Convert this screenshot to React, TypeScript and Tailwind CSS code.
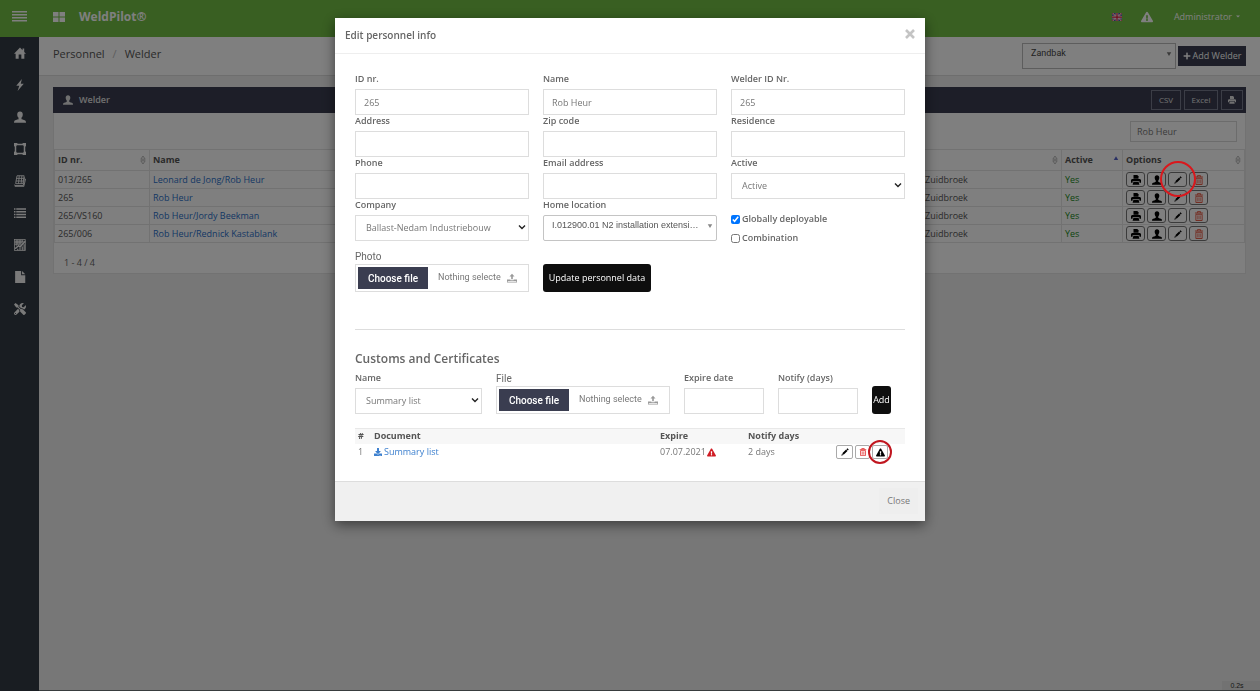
import React, { useState } from 'react';
import { FaDownload, FaExclamationTriangle, FaPlus, FaTools } from 'react-icons/fa';

type IconProps = { className?: string };

const HomeIcon = ({ className }: IconProps) => (
  <svg viewBox="0 0 16 16" className={className} fill="currentColor" aria-hidden="true">
    <path d="M8 .8 0 9h2.2v6.5h4V10h3.6v5.5h4V9H16l-2.4-2.5V2h-2.2v2.2z" />
  </svg>
);

const BoltIcon = ({ className }: IconProps) => (
  <svg viewBox="0 0 16 16" className={className} fill="currentColor" aria-hidden="true">
    <path d="M10.5 0 3 9h4l-2.2 7L13 6.2H9z" />
  </svg>
);

const UserIcon = ({ className }: IconProps) => (
  <svg viewBox="0 0 16 16" className={className} fill="currentColor" aria-hidden="true">
    <path d="M8 .5c2.400 0 3.700 1.600 3.700 4 0 1.900-.8 3.400-1.700 4.300v1.900c0 .6 4.600 1.200 5.500 2.600.3.600.5 1.400.5 2.200H0c0-.8.2-1.600.5-2.200C1.400 11.900 6 11.300 6 10.700V8.800c-.9-.9-1.700-2.400-1.700-4.300 0-2.400 1.300-4 3.700-4z" />
  </svg>
);

const FrameIcon = ({ className }: IconProps) => (
  <svg viewBox="0 0 16 16" className={className} fill="currentColor" aria-hidden="true">
    <path
      d="M0 0h4l1 1h6l1-1h4v4l-1 1v6l1 1v4h-4l-1-1H5l-1 1H0v-4l1-1V5L0 4zM3 4v8l1 1h8l1-1V4l-1-1H4z"
      fillRule="evenodd"
    />
  </svg>
);

const StackIcon = ({ className }: IconProps) => (
  <svg viewBox="0 0 16 16" className={className} fill="none" stroke="currentColor" strokeWidth="1.2" aria-hidden="true">
    <path d="M4 1h9.500L12 11.500H2.200zM2.500 8h10M3 4.500h10M7 1 6 11.500M10.500 1l-1 10.500" />
    <path d="M0 12.500 1 14h11.500L14 3M1 15.500h12L15.500 5" />
  </svg>
);

const ListIcon = ({ className }: IconProps) => (
  <svg viewBox="0 0 16 16" className={className} fill="currentColor" aria-hidden="true">
    <path d="M0 1.500h2v2H0zM3 1.500h13v2H3zM0 5.200h2v2H0zM3 5.200h13v2H3zM0 8.900h2v2H0zM3 8.900h13v2H3zM0 12.600h2v2H0zM3 12.600h13v2H3z" />
  </svg>
);

const ChartIcon = ({ className }: IconProps) => (
  <svg viewBox="0 0 16 16" className={className} fill="none" stroke="currentColor" aria-hidden="true">
    <path d="M0 .5h15v15H.5V0M3 1v8M5 1v6M7 1v6M9 1v6M11 1v4M1 3h12M1 5h10M1 7h8" strokeWidth="1.200" />
    <path d="M1.500 13 6 9l2 1.500L15 3" strokeWidth="2" />
    <path d="M5 15v-2M8 15v-3M11 15v-5M13.500 15V7" strokeWidth="1.500" />
  </svg>
);

const FileIcon = ({ className }: IconProps) => (
  <svg viewBox="0 0 16 16" className={className} fill="currentColor" aria-hidden="true">
    <path d="M1.500 0h8v5.500h5.500V16H1.500zM10.700 0 15 4.400h-4.300z" />
  </svg>
);

const PrinterIcon = ({ className }: IconProps) => (
  <svg viewBox="0 0 16 16" className={className} fill="currentColor" aria-hidden="true">
    <path d="M4 0h6l2 2v4H4z" />
    <path d="M1.500 6.500h13L16 8v4.500h-2.500V10h-11v2.500H0V8zM3.800 11.200h8.400l1.300 4.300h-11z" />
  </svg>
);

const PencilIcon = ({ className }: IconProps) => (
  <svg viewBox="0 0 16 16" className={className} fill="currentColor" aria-hidden="true">
    <path d="m12.800.5 2.700 2.700-1.800 1.800L11 2.300zM10.200 3.100l2.700 2.700-7.600 7.600-2.700-2.700zM2 11.500 4.500 14 .6 15.400z" />
  </svg>
);

const TrashIcon = ({ className }: IconProps) => (
  <svg viewBox="0 0 16 16" className={className} fill="none" stroke="currentColor" strokeWidth="1.500" aria-hidden="true">
    <path d="M1.500 3.200h13M5.500 3V1h5v2M3 5.200h10v10H3zM6.300 7v6.500M9.700 7v6.500" />
  </svg>
);

const UploadIcon = ({ className }: IconProps) => (
  <svg viewBox="0 0 16 16" className={className} fill="currentColor" aria-hidden="true">
    <path d="m8 1 4 4.500H9.300V10H6.700V5.500H4zM0 10.500h5.500v1.200h5v-1.200H16V15H0zM1.200 12.800v1h13.600v-1z" fillRule="evenodd" />
  </svg>
);

const ChevronIcon = ({ className }: IconProps) => (
  <svg viewBox="0 0 8 8" className={className} fill="none" stroke="currentColor" strokeWidth="1.400" aria-hidden="true">
    <path d="m1 2.500 3 3 3-3" />
  </svg>
);

const CaretIcon = ({ className }: IconProps) => (
  <svg viewBox="0 0 8 8" className={className} fill="currentColor" aria-hidden="true">
    <path d="M1 1.500h6l-3 5z" />
  </svg>
);

const SortIcon = ({ className }: IconProps) => (
  <svg viewBox="0 0 6 10" className={className} fill="none" stroke="#b8b8b8" strokeWidth="1" aria-hidden="true">
    <path d="M.8 4.200 3 1l2.200 3.200zM.8 5.800 3 9l2.200-3.200z" />
  </svg>
);

const FlagIcon = ({ className }: IconProps) => (
  <svg viewBox="0 0 20 16" className={className} aria-hidden="true">
    <path fill="#2b3a8c" d="M0 0h20v16H0z" />
    <path stroke="#fff" strokeWidth="3.500" d="m0 0 20 16M20 0 0 16" />
    <path stroke="#d8173a" strokeWidth="1.500" d="m0 0 20 16M20 0 0 16" />
    <path stroke="#fff" strokeWidth="5.500" d="M10 0v16M0 8h20" />
    <path stroke="#d8173a" strokeWidth="2.500" d="M10 0v16M0 8h20" />
  </svg>
);

const sideLinks = [
  { label: 'Home', Icon: HomeIcon },
  { label: 'Activity', Icon: BoltIcon },
  { label: 'Personnel', Icon: UserIcon },
  { label: 'Drawings', Icon: FrameIcon },
  { label: 'Registers', Icon: StackIcon },
  { label: 'Lists', Icon: ListIcon },
  { label: 'Reports', Icon: ChartIcon },
  { label: 'Documents', Icon: FileIcon },
  { label: 'Tools', Icon: FaTools },
];

const welders = [
  { id: '013/265', name: 'Leonard de Jong/Rob Heur', residence: 'Zuidbroek' },
  { id: '265', name: 'Rob Heur', residence: 'Zuidbroek' },
  { id: '265/VS160', name: 'Rob Heur/Jordy Beekman', residence: 'Zuidbroek' },
  { id: '265/006', name: 'Rob Heur/Rednick Kastablank', residence: 'Zuidbroek' },
];

const rowButton =
  'relative flex h-[15px] w-[19px] items-center justify-center rounded-[3px] border border-[#777] text-black';

const labelClass = 'block h-4 font-semibold leading-3 text-[#666]';
const controlClass = 'h-[26px] w-full border border-[#ddd] bg-white px-2 text-[#777] outline-none';

const Field = ({ id, label, value = '' }: { id: string; label: string; value?: string }) => (
  <div>
    <label htmlFor={id} className={labelClass}>
      {label}
    </label>
    <input id={id} defaultValue={value} className={controlClass} />
  </div>
);

const SelectField = ({ id, label, value }: { id: string; label: string; value: string }) => (
  <div>
    <label htmlFor={id} className={labelClass}>
      {label}
    </label>
    <div className="relative">
      <select id={id} className={`${controlClass} appearance-none pl-2.5`}>
        <option>{value}</option>
      </select>
      <ChevronIcon className="pointer-events-none absolute right-[3px] top-2 size-2 text-[#222]" />
    </div>
  </div>
);

const FileField = ({ id, label }: { id: string; label: string }) => (
  <div>
    <label htmlFor={id} className="block h-3.5 font-[Roboto,sans-serif] text-[10px] leading-[14px] text-[#666]">
      {label}
    </label>
    <div className="flex h-7 items-center border border-[#ddd] pl-0.5 font-[Roboto,sans-serif]">
      <button
        id={id}
        type="button"
        className="h-[22px] w-[70px] shrink-0 bg-[#3a3d50] text-[10px] font-medium text-white"
      >
        Choose file
      </button>
      <span className="ml-2.5 whitespace-nowrap text-[#777]">Nothing selecte</span>
      <UploadIcon className="ml-1.5 size-2.5 shrink-0 text-[#999]" />
    </div>
  </div>
);

const TopBar = () => (
  <header className="flex h-[37px] shrink-0 items-center bg-[#72be44] pb-1 text-white">
    <button type="button" aria-label="Menu" className="flex w-[39px] justify-center">
      <svg viewBox="0 0 15 11" className="h-[11px] w-[15px]" fill="currentColor">
        <path d="M0 0h15v1.500H0zM0 3h15v1.500H0zM0 6h15v1.500H0zM0 9h15v1.500H0z" />
      </svg>
    </button>
    <svg viewBox="0 0 12 10" className="ml-3.5 h-2.5 w-3" fill="currentColor" aria-hidden="true">
      <path d="M0 0h5.500v4.500H0zM6.500 0H12v4.500H6.500zM0 5.500h5.500V10H0zM6.500 5.500H12V10H6.500z" />
    </svg>
    <h1 className="ml-3.5 text-[12px] font-bold">WeldPilot®</h1>
    <div className="ml-auto flex items-center pr-5">
      <FlagIcon className="h-2 w-2.5" />
      <FaExclamationTriangle className="ml-[19px] size-3" />
      <button type="button" className="ml-[21px] flex items-center gap-1 text-[9px] font-medium">
        Administrator
        <svg viewBox="0 0 8 4" className="h-[3px] w-1" fill="currentColor" aria-hidden="true">
          <path d="M0 0h8L4 4z" />
        </svg>
      </button>
    </div>
  </header>
);

const WelderPanel = () => (
  <section className="mx-3.5 mt-[11px] border border-t-0 border-[#e4e4e4] bg-white">
    <div className="-mx-px flex h-[26px] items-center bg-[#3a3d50] pl-2.5 pr-[3px] text-[#e0e0e0]">
      <UserIcon className="size-2.5" />
      <h2 className="ml-1.5 font-semibold">Welder</h2>
      <div className="ml-auto flex gap-[3px] text-[8px]">
        <button type="button" className="h-5 w-[30px] border border-[#777b8c]">
          CSV
        </button>
        <button type="button" className="h-5 w-[34px] border border-[#777b8c]">
          Excel
        </button>
        <button
          type="button"
          aria-label="Print"
          className="flex h-5 w-[22px] items-center justify-center border border-[#777b8c]"
        >
          <PrinterIcon className="size-2" />
        </button>
      </div>
    </div>
    <div className="flex h-9 items-center justify-end pr-2">
      <input
        aria-label="Search"
        defaultValue="Rob Heur"
        className="h-[21px] w-[107px] border border-[#d8d8d8] px-1.5 text-[#777] outline-none"
      />
    </div>
    <table className="w-full table-fixed border-collapse text-left text-[#555] [&_td]:border [&_td]:border-[#e4e4e4] [&_td]:px-[3px] [&_th]:border [&_th]:border-[#e4e4e4] [&_th]:px-[3px]">
      <colgroup>
        <col className="w-[95px]" />
        <col />
        <col className="w-36" />
        <col className="w-[61px]" />
        <col className="w-[122px]" />
      </colgroup>
      <thead>
        <tr className="h-[21px]">
          <th>
            <div className="flex items-center justify-between">
              ID nr.
              <SortIcon className="h-2.5 w-1.5" />
            </div>
          </th>
          <th>
            <div className="flex items-center justify-between">
              Name
              <SortIcon className="h-2.5 w-1.5" />
            </div>
          </th>
          <th>
            <div className="flex items-center justify-end">
              <SortIcon className="h-2.5 w-1.5" />
            </div>
          </th>
          <th>
            <div className="flex items-center justify-between">
              Active
              <CaretIcon className="mb-1 size-1.5 rotate-180 text-[#5560c8]" />
            </div>
          </th>
          <th>
            <div className="flex items-center justify-between">
              Options
              <SortIcon className="h-2.5 w-1.5" />
            </div>
          </th>
        </tr>
      </thead>
      <tbody>
        {welders.map((welder, index) => (
          <tr key={welder.id} className="h-[18px]">
            <td>{welder.id}</td>
            <td>
              <a href="#" className="text-[#2a6fc9]">
                {welder.name}
              </a>
            </td>
            <td>
              <span className="pl-1">{welder.residence}</span>
            </td>
            <td className="text-[#1a8a1a]">Yes</td>
            <td>
              <div className="flex gap-0.5">
                <button type="button" aria-label="Print" className={rowButton}>
                  <PrinterIcon className="size-2.5" />
                </button>
                <button type="button" aria-label="Profile" className={rowButton}>
                  <UserIcon className="size-2.5" />
                </button>
                <button type="button" aria-label="Edit" className={rowButton}>
                  <PencilIcon className="size-2" />
                  {index === 0 && (
                    <span className="absolute -left-[9px] -top-3 z-20 size-9 rounded-full border-2 border-[#d9181d]" />
                  )}
                </button>
                <button type="button" aria-label="Delete" className={rowButton}>
                  <TrashIcon className="size-2.5 text-[#e8553f]" />
                </button>
              </div>
            </td>
          </tr>
        ))}
      </tbody>
    </table>
    <p className="px-2.5 pb-1 pt-3.5 leading-3 text-[#666]">1 - 4 / 4</p>
  </section>
);

const PersonnelForm = () => {
  const [deployable, setDeployable] = useState(true);
  const [combination, setCombination] = useState(false);

  return (
    <form onSubmit={(e) => e.preventDefault()}>
      <div className="grid grid-cols-3 gap-x-3.5">
        <Field id="id-nr" label="ID nr." value="265" />
        <Field id="name" label="Name" value="Rob Heur" />
        <Field id="welder-id" label="Welder ID Nr." value="265" />
        <Field id="address" label="Address" />
        <Field id="zip" label="Zip code" />
        <Field id="residence" label="Residence" />
        <Field id="phone" label="Phone" />
        <Field id="email" label="Email address" />
        <SelectField id="active" label="Active" value="Active" />
        <SelectField id="company" label="Company" value="Ballast-Nedam Industriebouw" />
        <div>
          <label htmlFor="location" className={labelClass}>
            Home location
          </label>
          <div className="relative">
            <select
              id="location"
              className="h-[26px] w-full appearance-none rounded-[2px] border border-[#c4c4c4] bg-white pb-1 pl-2 font-['Liberation_Sans',sans-serif] text-[9px] text-[#555] outline-none"
            >
              <option>I.012900.01 N2 installation extensi…</option>
            </select>
            <CaretIcon className="pointer-events-none absolute right-1 top-2 size-1.5 text-[#888]" />
          </div>
        </div>
        <div className="flex flex-col gap-[7px] pt-3.5 font-semibold leading-3 text-[#666]">
          <label className="flex items-center gap-0.5">
            <input
              type="checkbox"
              checked={deployable}
              onChange={(e) => setDeployable(e.target.checked)}
              className="size-[9px]"
            />
            Globally deployable
          </label>
          <label className="flex items-center gap-0.5">
            <input
              type="checkbox"
              checked={combination}
              onChange={(e) => setCombination(e.target.checked)}
              className="size-[9px]"
            />
            Combination
          </label>
        </div>
      </div>
      <div className="mt-1.5 grid grid-cols-3 items-end gap-x-3.5">
        <FileField id="photo" label="Photo" />
        <div>
          <button type="submit" className="h-7 w-[108px] whitespace-nowrap rounded-[3px] bg-[#0e0e0e] font-medium text-white">
            Update personnel data
          </button>
        </div>
      </div>
    </form>
  );
};

const Certificates = () => (
  <section className="mt-[37px] border-t border-[#ddd] pt-5">
    <h3 className="text-[12px] font-semibold leading-[18px] text-[#666]">Customs and Certificates</h3>
    <div className="mt-1 flex items-start gap-3.5">
      <div className="w-[127px]">
        <SelectField id="cert-name" label="Name" value="Summary list" />
      </div>
      <div className="w-[174px]">
        <FileField id="cert-file" label="File" />
      </div>
      <div className="w-20">
        <Field id="expire" label="Expire date" />
      </div>
      <div className="w-20">
        <Field id="notify" label="Notify (days)" />
      </div>
      <button type="button" className="mt-3.5 h-7 w-[19px] rounded-[3px] bg-[#0e0e0e] font-medium text-white">
        Add
      </button>
    </div>
    <table className="mt-3.5 w-full table-fixed text-left leading-3 text-[#777]">
      <colgroup>
        <col className="w-4" />
        <col />
        <col className="w-[88px]" />
        <col className="w-[88px]" />
        <col className="w-[72px]" />
      </colgroup>
      <thead className="border-t border-[#e8e8e8] bg-[#f7f7f7] text-[#555]">
        <tr className="h-[15px]">
          <th className="pl-[3px]">#</th>
          <th className="pl-[3px]">Document</th>
          <th className="pl-[3px]">Expire</th>
          <th className="pl-[3px]">Notify days</th>
          <th aria-label="Options" />
        </tr>
      </thead>
      <tbody>
        <tr className="h-[17px]">
          <td className="pl-[3px]">1</td>
          <td className="pl-[3px]">
            <a href="#" className="flex items-center gap-0.5 text-[#3d80cf]">
              <FaDownload className="size-2" />
              Summary list
            </a>
          </td>
          <td className="pl-[3px]">
            <span className="flex items-center gap-px">
              07.07.2021
              <FaExclamationTriangle className="size-[9px] text-[#d01c24]" />
            </span>
          </td>
          <td className="pl-[3px]">2 days</td>
          <td>
            <div className="flex gap-0.5 pl-[3px] text-black">
              <button
                type="button"
                aria-label="Edit"
                className="flex h-3.5 w-[17px] items-center justify-center rounded-[2px] border border-[#aaa]"
              >
                <PencilIcon className="size-2" />
              </button>
              <button
                type="button"
                aria-label="Delete"
                className="flex h-3.5 w-[15px] items-center justify-center rounded-[2px] border border-[#aaa]"
              >
                <TrashIcon className="size-2 text-[#e02a2a]" />
              </button>
              <button
                type="button"
                aria-label="Notify"
                className="relative flex h-3.5 w-4 items-center justify-center rounded-[2px] border border-[#aaa]"
              >
                <FaExclamationTriangle className="size-[9px]" />
                <span className="absolute -left-[5px] -top-1.5 size-6 rounded-full border-2 border-[#c0161f]" />
              </button>
            </div>
          </td>
        </tr>
      </tbody>
    </table>
  </section>
);

const EditModal = () => (
  <div className="fixed inset-0 z-10 flex items-start justify-center overflow-y-auto bg-black/50 pt-[18px]">
    <div
      role="dialog"
      aria-labelledby="modal-title"
      className="w-[590px] bg-white shadow-[0_4px_12px_rgba(0,0,0,0.5)]"
    >
      <div className="flex h-9 items-center justify-between border-b border-[#eee] px-2.5">
        <h2 id="modal-title" className="text-[10px] font-semibold text-[#666]">
          Edit personnel info
        </h2>
        <button type="button" aria-label="Close dialog" className="pb-1 text-[#c4c4c4]">
          <svg viewBox="0 0 10 10" className="size-2.5" stroke="currentColor" strokeWidth="2.600">
            <path d="m1 1 8 8M9 1 1 9" />
          </svg>
        </button>
      </div>
      <div className="px-5 pb-5 pt-[19px]">
        <PersonnelForm />
        <Certificates />
      </div>
      <div className="flex h-10 items-center justify-end border-t border-[#ddd] bg-[#f0f0f0] px-[7px]">
        <button type="button" className="h-[26px] bg-[#eee] px-2 text-[#777]">
          Close
        </button>
      </div>
    </div>
  </div>
);

export default function App() {
  return (
    <div className="flex min-h-screen flex-col bg-[#efefef] font-['Open_Sans',sans-serif] text-[9px]">
      <TopBar />
      <div className="flex flex-1">
        <nav className="w-[39px] shrink-0 bg-[#323a44]">
          {sideLinks.map(({ label, Icon }) => (
            <a key={label} href="#" aria-label={label} className="flex h-8 items-center justify-center text-[#f4f4f4]">
              <Icon className="size-3" />
            </a>
          ))}
        </nav>
        <main className="flex min-w-0 flex-1 flex-col">
          <div className="flex h-[39px] items-center border-b border-[#dcdcdc] bg-white px-3.5">
            <nav aria-label="Breadcrumb" className="flex gap-2 pb-1 text-[11px] text-[#555]">
              <a href="#">Personnel</a>
              <span className="text-[#bbb]">/</span>
              <span>Welder</span>
            </nav>
            <div className="ml-auto flex items-center gap-0.5">
              <div className="relative">
                <select
                  aria-label="Project"
                  className="h-[26px] w-[154px] appearance-none border border-[#bbb] bg-white pb-1 pl-2 font-[Roboto,sans-serif] text-[9px] text-[#444]"
                >
                  <option>Zandbak</option>
                </select>
                <CaretIcon className="pointer-events-none absolute right-1 top-2 size-1.5 text-[#777]" />
              </div>
              <button
                type="button"
                className="flex h-5 w-[68px] items-center justify-center gap-0.5 bg-[#3a3d50] font-medium text-white"
              >
                <FaPlus className="size-2" />
                Add Welder
              </button>
            </div>
          </div>
          <WelderPanel />
          <footer className="mt-auto flex justify-end border-b border-[#70787c]">
            <span className="w-[38px] bg-[#e4e4e4] pr-2 text-center font-['Liberation_Sans',sans-serif] text-[7px] leading-[9px] text-[#333]">
              0.2s
            </span>
          </footer>
        </main>
      </div>
      <EditModal />
    </div>
  );
}
